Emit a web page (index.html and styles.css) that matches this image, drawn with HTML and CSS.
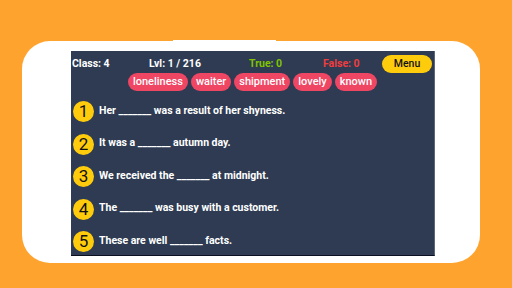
FILE: index.html
```html
<!DOCTYPE html>
<html lang="en">
<head>
  <meta charset="UTF-8">
  <title>Fill in the blanks - Class 4</title>
  <link rel="stylesheet" href="styles.css">
</head>
<body>
  <div class="phone">
    <div class="notch"></div>
    <div class="screen">
      <div class="top-bar">
        <span>Class: 4</span>
        <span>Lvl: 1 / 216</span>
        <span class="true">True: 0</span>
        <span class="false">False: 0</span>
        <a href="#" class="menu-btn">Menu</a>
      </div>

      <div class="words">
        <span class="word">loneliness</span>
        <span class="word">waiter</span>
        <span class="word">shipment</span>
        <span class="word">lovely</span>
        <span class="word">known</span>
      </div>

      <div class="questions">
        <div class="question">
          <div class="num">1</div>
          <p>Her _______ was a result of her shyness.</p>
        </div>
        <div class="question">
          <div class="num">2</div>
          <p>It was a _______ autumn day.</p>
        </div>
        <div class="question">
          <div class="num">3</div>
          <p>We received the _______ at midnight.</p>
        </div>
        <div class="question">
          <div class="num">4</div>
          <p>The _______ was busy with a customer.</p>
        </div>
        <div class="question">
          <div class="num">5</div>
          <p>These are well _______ facts.</p>
        </div>
      </div>
    </div>
  </div>
</body>
</html>
```

FILE: styles.css
```css
body {
  margin: 0;
  width: 512px;
  height: 288px;
  background: #ffa32f;
  font-family: Roboto, "Liberation Sans", sans-serif;
  overflow: hidden;
}
.phone {
  position: relative;
  margin: 41px 0 0 22px;
  width: 458px;
  height: 222px;
  background: #fff;
  border-radius: 28px;
  box-sizing: border-box;
  padding: 10px 0 0 49px;
}
.notch {
  position: absolute;
  top: -1px;
  left: 151px;
  width: 103px;
  height: 2px;
  background: #fff;
}
.screen {
  width: 364px;
  height: 205px;
  background: #2e3b52;
  box-sizing: border-box;
  border-bottom: 1px solid #0b1020;
  border-right: 1px solid #5d6675;
  color: #fff;
}
.top-bar {
  display: grid;
  grid-template-columns: 77px 100px 74px 59px 50px;
  align-items: center;
  height: 21px;
  padding: 2px 0 0 1px;
  font-size: 10.5px;
  font-weight: bold;
}
.true {
  color: #80c400;
}
.false {
  color: #f03e3e;
}
.menu-btn {
  display: block;
  height: 18px;
  line-height: 18px;
  background: #ffcc0d;
  border-radius: 9px;
  color: #111;
  text-align: center;
  text-decoration: none;
  font-size: 10.5px;
  font-weight: 500;
}
.words {
  display: flex;
  justify-content: center;
  gap: 3px;
  margin-top: -1px;
}
.word {
  height: 18px;
  line-height: 18px;
  padding: 0 5px;
  background: #ef4664;
  border-radius: 9px;
  font-size: 11px;
  font-weight: 500;
}
.questions {
  display: flex;
  flex-direction: column;
  gap: 10.5px;
  margin-top: 8px;
  padding-left: 2px;
}
.question {
  display: flex;
  align-items: center;
  gap: 5px;
  height: 22px;
}
.num {
  width: 21px;
  height: 21px;
  border-radius: 50%;
  background: #ffcc0d;
  color: #111;
  font-size: 17px;
  line-height: 21px;
  text-align: center;
  margin-top: 3px;
}
.question p {
  margin: 0;
  font-size: 10.5px;
  font-weight: bold;
}
```
